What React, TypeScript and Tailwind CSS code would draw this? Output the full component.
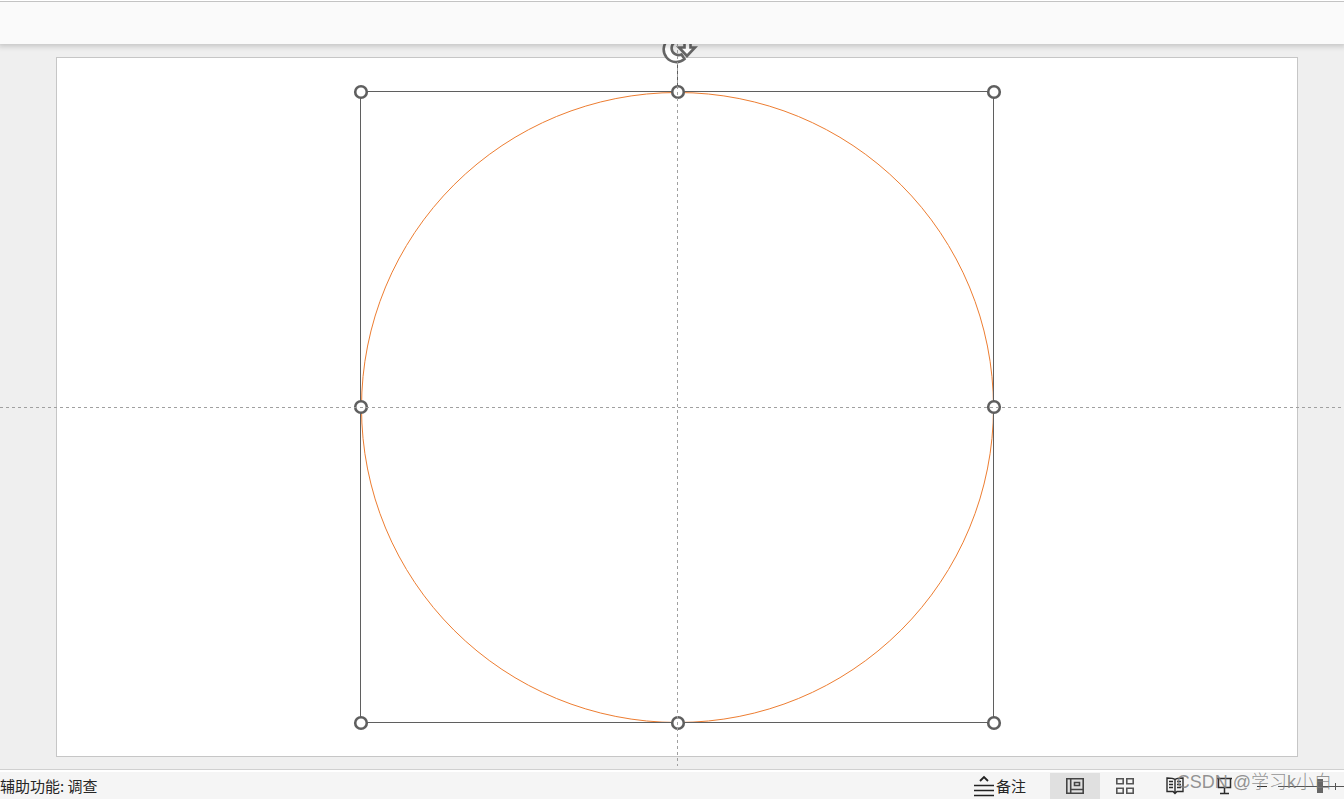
const HANDLES = [
  [7, 47],
  [324, 47],
  [640, 47],
  [7, 362],
  [640, 362],
  [7, 678],
  [324, 678],
  [640, 678],
];

export default function App() {
  return (
    <div className="flex h-screen flex-col overflow-hidden bg-[#efefef] font-['Noto_Sans_CJK_SC',sans-serif] text-[15px] text-[#262626]">
      {/* Collapsed ribbon */}
      <header className="relative z-10 h-11 shrink-0 border-t border-white bg-[#fafafa] shadow-[0_0_6px_2px_rgba(0,0,0,0.2)]">
        <div className="h-px bg-[#c3c3c3]" />
      </header>
      <SlideEditor />
      <StatusBar />
    </div>
  );
}

function SlideEditor() {
  return (
    <main className="relative flex min-h-0 flex-1 overflow-hidden pt-[13px] pr-[46px] pb-3 pl-14">
      <section
        aria-label="幻灯片"
        className="relative flex-1 border border-[#c6c6c6] bg-white"
      >
        <Selection />
      </section>
      <svg
        className="absolute top-1/2 left-0 h-px w-full"
        shapeRendering="crispEdges"
        aria-hidden
      >
        <line x2="100%" y1="0.5" y2="0.5" stroke="#a0a0a0" strokeDasharray="3 3" />
      </svg>
    </main>
  );
}

/* Selected ellipse with its frame, guide and resize handles */
function Selection() {
  return (
    <svg
      width="646"
      height="725"
      viewBox="0 0 646 725"
      fill="none"
      className="absolute -top-3.5 left-1/2 -translate-x-1/2 overflow-visible"
      aria-hidden
    >
      <RotateHandle />
      <ellipse cx="323.5" cy="363.5" rx="316" ry="315" stroke="#ed7d31" />
      <rect x="6.5" y="47.5" width="633" height="631" stroke="#5f5f5f" shapeRendering="crispEdges" />
      <path d="M323.5 18v24" stroke="#5f5f5f" />
      {HANDLES.map(([x, y]) => (
        <circle key={`${x}-${y}`} cx={x} cy={y + 1} r="5.8" fill="#fff" stroke="#5f5f5f" strokeWidth="2.6" />
      ))}
      <path d="M323.5 0V722" stroke="#a0a0a0" strokeDasharray="3 3" shapeRendering="crispEdges" />
    </svg>
  );
}

function RotateHandle() {
  return (
    <g stroke="#666" strokeWidth="2.6">
      <path d="M314 -4A12 12 0 0 0 330.500 15L327.500 10.500A7 7 0 1 1 328 -2" fill="#fff" />
      <path d="M325 3.500H330.500V-4H336.500V3.500H341L333 12Z" fill="#fff" />
    </g>
  );
}

function StatusBar() {
  return (
    <footer className="relative flex h-[30px] shrink-0 items-stretch border-t border-[#d0d0d0] bg-[#f5f5f5]">
      <div className="absolute inset-x-0 top-0 h-0.5 bg-white" />
      <button type="button" className="mt-1 whitespace-nowrap">
        辅助功能: 调查
      </button>
      <div className="mt-[3px] ml-auto flex">
        <button type="button" className="mr-6 flex items-center gap-0.5">
          <NotesIcon />
          备注
        </button>
        <button
          type="button"
          aria-label="普通视图"
          aria-pressed="true"
          className="flex w-[50px] items-center justify-center bg-[#e0e0e0]"
        >
          <NormalIcon />
        </button>
        <button type="button" aria-label="幻灯片浏览" className="flex w-[50px] items-center justify-center">
          <SorterIcon />
        </button>
        <button type="button" aria-label="阅读视图" className="flex w-[50px] items-center justify-center">
          <ReadingIcon />
        </button>
        <button type="button" aria-label="幻灯片放映" className="flex w-[50px] items-center justify-center">
          <ShowIcon />
        </button>
        <button type="button" aria-label="缩小" className="flex w-6 items-center justify-center">
          <svg width="10" height="26" stroke="#333" aria-hidden>
            <path d="M0 13.5h10" />
          </svg>
        </button>
        <svg width="70" height="26" fill="none" aria-hidden>
          <path d="M4 13.5h66M61.500 10v7" stroke="#555" />
          <path d="M43 6h6v14h-6z" fill="#666" />
        </svg>
      </div>
      <div className="pointer-events-none absolute top-0 right-3 font-['Liberation_Sans','Noto_Sans_CJK_SC',sans-serif] text-[18px] leading-6 font-light whitespace-nowrap text-[#808080]/85">
        CSDN @学习k小白
      </div>
    </footer>
  );
}

function NotesIcon() {
  return (
    <svg width="20" height="22" viewBox="0 0 20 22" fill="none" stroke="#222" aria-hidden>
      <path d="M6 6L10 2 14 6" strokeWidth="1.8" />
      <path d="M0 10.500h20M0 15.500h20M0 20.500h20" strokeWidth="1.300" />
    </svg>
  );
}

function NormalIcon() {
  return (
    <svg width="18" height="16" viewBox="0 0 18 16" fill="none" stroke="#444" strokeWidth="1.6" aria-hidden>
      <path d="M.8.8h16.400v14.400H.8zM4.700.8v14.400M4.700 11.500h12.500M8.500 4.500h5v3h-5z" />
    </svg>
  );
}

function SorterIcon() {
  return (
    <svg width="18" height="16" viewBox="0 0 18 16" fill="none" stroke="#555" strokeWidth="1.6" aria-hidden>
      <path d="M.8.8h6.400v5H.8zM10.800.8h6.400v5h-6.400zM.8 10.200h6.400v5H.8zM10.800 10.200h6.400v5h-6.400z" />
    </svg>
  );
}

function ReadingIcon() {
  return (
    <svg width="18" height="18" viewBox="0 0 18 18" fill="none" stroke="#2b2b2b" strokeWidth="1.4" aria-hidden>
      <path d="M9 2.500C7.500 1.200 4 1 1 1v13.500h6L9 16.500l2-2h6V1c-3 0-6.500.2-8 1.500zM9 2.500V16" />
      <path d="M3 4.500h4M3 7.500h4M3 10.500h4M11 4.500h4M11 7.500h4M11 10.500h4" />
    </svg>
  );
}

function ShowIcon() {
  return (
    <svg width="16" height="18" viewBox="0 0 16 18" fill="none" stroke="#2b2b2b" strokeWidth="1.500" aria-hidden>
      <path d="M0 1.500h15M1.500 1.500v9h12v-9M7.500 10.500v6M3 16.500h9" />
    </svg>
  );
}
